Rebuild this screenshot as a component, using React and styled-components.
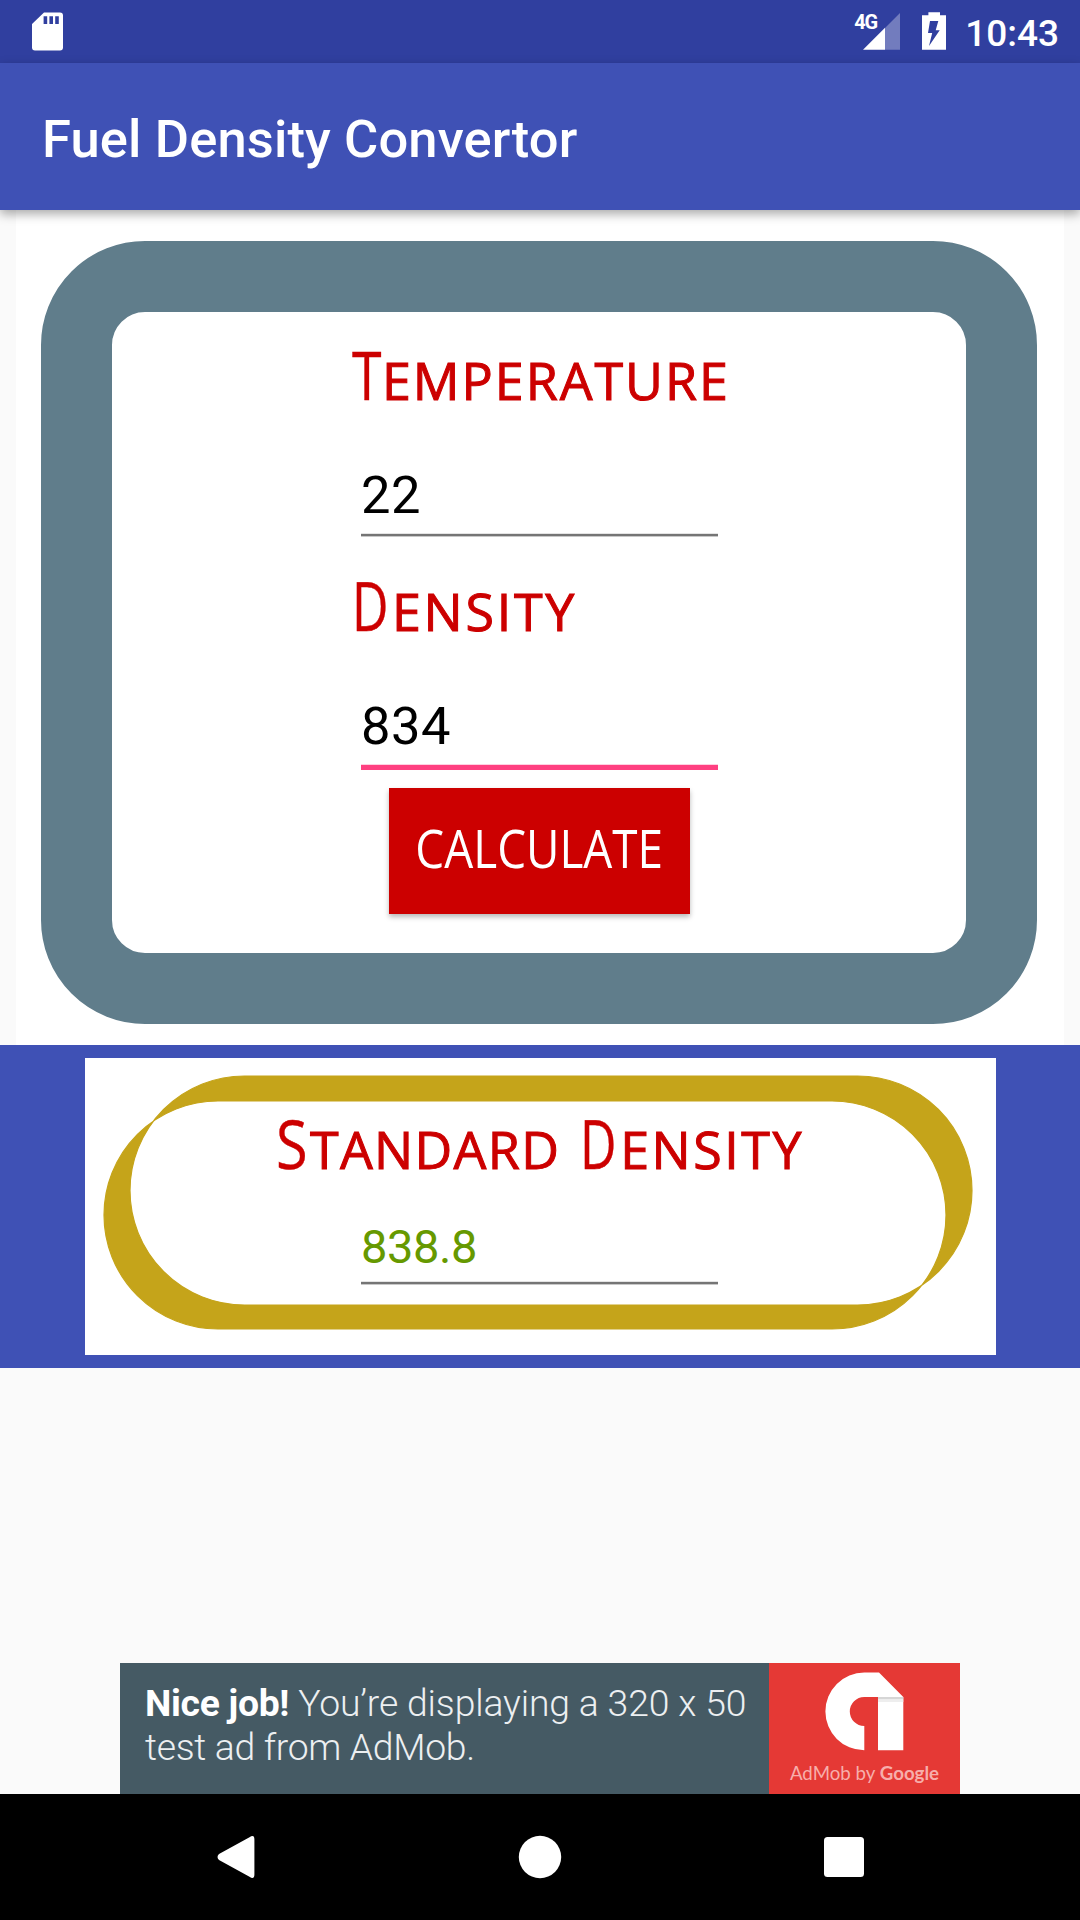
import React from "react";
import styled, { createGlobalStyle } from "styled-components";

const GlobalStyle = createGlobalStyle`
  * { box-sizing: border-box; }
  html, body { margin: 0; padding: 0; background: #fafafa; }
`;

const Screen = styled.div`
  display: flex;
  flex-direction: column;
  width: 1080px;
  height: 1920px;
  overflow: hidden;
  background: #fafafa;
  font-family: Roboto, "Liberation Sans", sans-serif;
`;

const StatusBar = styled.header`
  display: flex;
  justify-content: space-between;
  height: 63px;
  flex: none;
  padding: 0 21px 0 32px;
  background: #303f9f;
  color: #fff;
`;

const StatusIcons = styled.div`
  display: flex;
  height: 63px;
`;

const NetworkType = styled.span`
  width: 23px;
  margin: 11px -14px 0 0;
  font: 700 20px/22px Roboto, sans-serif;
  letter-spacing: -1.2px;
  white-space: nowrap;
`;

const Signal = styled.svg`
  width: 37px;
  height: 63px;
`;

const Battery = styled.svg`
  width: 24px;
  height: 63px;
  margin-left: 21.5px;
`;

const Clock = styled.time`
  margin-left: 19.5px;
  font-size: 37px;
  font-weight: 500;
  line-height: 67px;
`;

const AppBar = styled.div`
  position: relative;
  z-index: 1;
  display: flex;
  align-items: center;
  height: 147px;
  flex: none;
  padding: 4px 42px 0;
  background: #3f51b5;
  box-shadow: 0 4px 10px rgba(0, 0, 0, 0.34);
`;

const Title = styled.h1`
  margin: 0;
  color: #fff;
  font-size: 52.5px;
  font-weight: 500;
  line-height: 62px;
  letter-spacing: 0.13px;
`;

const FormPanel = styled.main`
  height: 835px;
  flex: none;
  margin: 0 16px;
  padding: 30.5px 0 0 25px;
  background: #fff;
`;

const Frame = styled.form`
  display: flex;
  flex-direction: column;
  align-items: flex-start;
  width: 996px;
  height: 783.2px;
  padding: 29px 0 0 240px;
  border: 71px solid #607d8b;
  border-radius: 104px;
`;

const Heading = styled.h2`
  display: flex;
  align-items: baseline;
  height: 67px;
  margin: ${(p) => p.$top || 0}px 0 0;
  color: #c00;
  font-family: "Open Sans", "Noto Sans", sans-serif;
  font-weight: 400;
  white-space: nowrap;
`;

const Word = styled.span`
  display: flex;
  align-items: baseline;
  margin-left: ${(p) => p.$gap || 0}px;
`;

const Initial = styled.span`
  width: ${(p) => p.$width}px;
  font-size: 67px;
  line-height: 67px;
  transform: scaleX(${(p) => p.$stretch});
  transform-origin: 0 0;
  -webkit-text-stroke: 0.4px #c00;
`;

const SmallCaps = styled.span`
  font-size: 52px;
  line-height: 52px;
  letter-spacing: ${(p) => p.$spacing}px;
  text-transform: uppercase;
  -webkit-text-stroke: 1px #c00;
`;

const Field = styled.div`
  display: flex;
  flex-direction: column;
  width: 357px;
  height: ${(p) => p.$height}px;
  margin: ${(p) => p.$top}px 0 0 ${(p) => p.$left || 9}px;
`;

const Value = styled.span`
  flex: 1;
  color: ${(p) => p.$color || "#000"};
  font-size: ${(p) => p.$size || 52.5}px;
  letter-spacing: ${(p) => p.$spacing || 0}px;
  line-height: 62px;
`;

const Underline = styled.i`
  height: 4px;
  background: linear-gradient(#e4e4e4 1px, #757575 1px 3px, #c8c8c8 3px);
`;

const ActiveUnderline = styled.i`
  height: 6px;
  background: linear-gradient(#ffd0e0 1px, #ff4081 1px);
`;

const Button = styled.button`
  display: flex;
  justify-content: center;
  width: 301px;
  height: 126px;
  margin: 18px 0 0 37px;
  padding: 0;
  border: 0;
  background: #c00;
  color: #fff;
  font: 400 53px/120px "Open Sans", "Noto Sans", sans-serif;
  box-shadow: 0 3px 5px rgba(0, 0, 0, 0.28);
`;

const ButtonLabel = styled.span`
  transform: scaleX(0.865);
`;

const ResultSection = styled.section`
  height: 323px;
  flex: none;
  padding: 13px 84px 13px 85px;
  background: #3f51b5;
`;

const ResultCard = styled.div`
  display: grid;
  width: 911px;
  height: 297px;
  background: #fff;

  > * { grid-area: 1 / 1; }
`;

const ResultContent = styled.div`
  display: flex;
  flex-direction: column;
  padding: 51.5px 0 0 191px;
`;

const AdSlot = styled.footer`
  display: flex;
  flex: 1;
  align-items: flex-end;
  justify-content: center;
`;

const AdBanner = styled.div`
  display: flex;
  width: 840px;
  height: 131px;
  background: #455a64;
`;

const AdText = styled.p`
  flex: none;
  width: 649px;
  margin: 0;
  padding: 18px 0 0 25px;
  color: #eceff1;
  font-size: 37.3px;
  font-weight: 300;
  line-height: 44px;
  white-space: nowrap;

  b { color: #fff; font-weight: 700; letter-spacing: -0.3px; }
`;

const AdLine = styled.span`
  display: block;
  letter-spacing: ${(p) => p.$spacing}px;
`;

const AdBrand = styled.div`
  display: flex;
  flex: none;
  flex-direction: column;
  align-items: center;
  width: 191px;
  background: #e53935;
`;

const AdCaption = styled.span`
  margin-top: 9px;
  color: #f7aeab;
  font: 400 18.7px/26px Lato, sans-serif;
  white-space: nowrap;

  b { font-weight: 700; }
`;

const NavBar = styled.nav`
  display: flex;
  align-items: center;
  justify-content: space-between;
  height: 126px;
  flex: none;
  padding: 0 216px;
  background: #000;
`;

function SmallCapsWord({ text, width, stretch, spacing, gap }) {
  return (
    <Word $gap={gap}>
      <Initial $width={width} $stretch={stretch}>{text[0]}</Initial>
      <SmallCaps $spacing={spacing}>{text.slice(1)}</SmallCaps>
    </Word>
  );
}

export default function App() {
  return (
    <Screen>
      <GlobalStyle />
      <StatusBar>
        <svg width="31" height="63" viewBox="0 0 31 63">
          <path fill="#fff" fillRule="evenodd" d="M12 12.5H28a3 3 0 0 1 3 3V47.5a3 3 0 0 1-3 3H3a3 3 0 0 1-3-3V24ZM11.6 16.2V24H15.2V16.2ZM17.4 16.2V24H21V16.2ZM23.2 16.2V24H26.8V16.2Z" />
        </svg>
        <StatusIcons>
          <NetworkType>4G</NetworkType>
          <Signal viewBox="0 0 37 63">
            <path fill="#fff" fillOpacity=".32" d="M22 28 37 13V49.7H22Z" />
            <path fill="#fff" d="M0 49.7 22 27.8V49.7Z" />
          </Signal>
          <Battery viewBox="0 0 24 63">
            <path fill="#fff" fillRule="evenodd" d="M6.4 12.2H18V15.2H24V49.8H0V15.2H6.4ZM8 21 6 33H10.2L7 46 17.7 30.2H13.7L16.3 21Z" />
          </Battery>
          <Clock>10:43</Clock>
        </StatusIcons>
      </StatusBar>
      <AppBar>
        <Title>Fuel Density Convertor</Title>
      </AppBar>
      <FormPanel>
        <Frame>
          <Heading>
            <SmallCapsWord text="Temperature" width={30} stretch={0.8} spacing={1.95} />
          </Heading>
          <Field $top={56.5} $height={73}>
            <Value $spacing={0.5}>22</Value>
            <Underline />
          </Field>
          <Heading $top={34.5}>
            <SmallCapsWord text="Density" width={40} stretch={0.75} spacing={2.7} />
          </Heading>
          <Field $top={56.5} $height={75}>
            <Value $spacing={0.5}>834</Value>
            <ActiveUnderline />
          </Field>
          <Button type="button">
            <ButtonLabel>CALCULATE</ButtonLabel>
          </Button>
        </Frame>
      </FormPanel>
      <ResultSection>
        <ResultCard>
          <svg width="911" height="297" viewBox="85 1058 911 297">
            <path
              fill="#c5a41a"
              fillRule="evenodd"
              stroke="#c5a41a"
              strokeWidth="1.2"
              d="M244.500 1076H857.500a114.500 114.500 0 0 1 0 229H244.500a114.500 114.500 0 0 1 0-229ZM218 1101H832a114 114 0 0 1 0 228H218a114 114 0 0 1 0-228Z"
            />
          </svg>
          <ResultContent>
            <Heading>
              <SmallCapsWord text="Standard" width={34} stretch={0.86} spacing={1.3} />
              <SmallCapsWord gap={20} text="Density" width={40} stretch={0.75} spacing={2.5} />
            </Heading>
            <Field $top={39} $left={85} $height={69}>
              <Value $size={47} $spacing={-0.4} $color="#669900">838.8</Value>
              <Underline />
            </Field>
          </ResultContent>
        </ResultCard>
      </ResultSection>
      <AdSlot>
        <AdBanner>
          <AdText>
            <AdLine $spacing={-0.13}><b>Nice job!</b> You’re displaying a 320 x 50</AdLine>
            <AdLine $spacing={-0.3}>test ad from AdMob.</AdLine>
          </AdText>
          <AdBrand>
            <svg width="79" height="88" viewBox="825 1663 79 88">
              <path fill="#fff" d="M864.300 1672.500H879L903.300 1697H864.300A14.500 14.500 0 0 0 864.300 1726V1750.300A38.900 38.900 0 0 1 864.300 1672.500Z" />
              <path fill="#fff" d="M878 1697H903.300V1750.300H878Z" />
              <path fill="#d6d6d6" d="M878 1697H903.300V1699.500H878Z" />
              <path fill="#eee" d="M878 1699.500H903.300V1702H878Z" />
            </svg>
            <AdCaption>AdMob by <b>Google</b></AdCaption>
          </AdBrand>
        </AdBanner>
      </AdSlot>
      <NavBar>
        <svg width="40" height="44" viewBox="0 0 40 44">
          <path fill="#fff" d="M33.500 2.200Q38.400-1 38.400 4.500V39.500Q38.400 45 33.500 41.800L3 25Q0 22 3 19Z" />
        </svg>
        <svg width="44" height="44" viewBox="0 0 44 44">
          <circle cx="22" cy="22" r="21.200" fill="#fff" />
        </svg>
        <svg width="40" height="44" viewBox="0 0 40 44">
          <rect x="0" y="2" width="40" height="40" rx="3.500" fill="#fff" />
        </svg>
      </NavBar>
    </Screen>
  );
}
